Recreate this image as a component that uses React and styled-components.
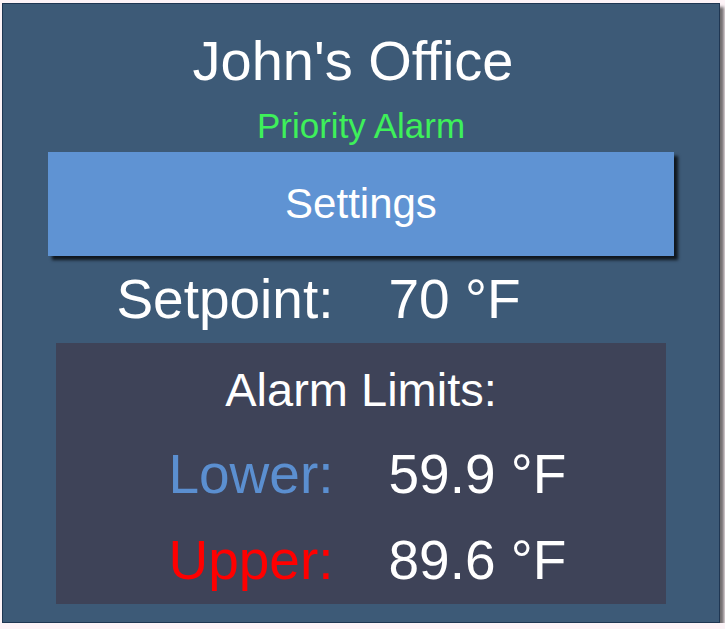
import React from 'react';
import styled, { createGlobalStyle } from 'styled-components';

const GlobalStyle = createGlobalStyle`
  html, body {
    margin: 0;
    padding: 0;
    background: #fdf3f7;
    font-family: "Liberation Sans", Arial, sans-serif;
  }
`

const Page = styled.div`
  padding: 3px 0 0 2px;
`

const Panel = styled.div`
  box-sizing: border-box;
  width: 718px;
  height: 620px;
  background: #3d5a77;
  border: 1px solid #1f3652;
  box-shadow: 4px 4px 3px rgba(0, 0, 0, 0.55);
  display: flex;
  flex-direction: column;
  align-items: stretch;
  padding: 27px 45px 0;
  color: #ffffff;
`

const Title = styled.h1`
  margin: 0;
  padding-right: 16px;
  font-weight: normal;
  font-size: 56px;
  line-height: 60px;
  text-align: center;
`

const Status = styled.div`
  margin-top: 15px;
  font-size: 35px;
  line-height: 40px;
  text-align: center;
  color: #3ef05a;
`

const SettingsButton = styled.button`
  margin-top: 6px;
  height: 104px;
  border: none;
  background: #5f93d3;
  color: #ffffff;
  font-family: inherit;
  font-size: 42px;
  box-shadow: 4px 4px 3px rgba(0, 0, 0, 0.75);
  cursor: pointer;
`

const ReadingGrid = styled.div`
  display: grid;
  grid-template-columns: 1fr 1fr;
  column-gap: 55px;
  row-gap: ${p => p.rowGap || 0}px;
  margin-top: ${p => p.top || 0}px;
`

const Label = styled.div`
  text-align: right;
  font-size: 55px;
  line-height: 60px;
  color: ${p => p.color || '#ffffff'};
`

const Value = styled.div`
  text-align: left;
  font-size: 55px;
  line-height: 60px;
`

const LimitsBox = styled.div`
  margin: 14px 8px 0;
  background: #3e4358;
  padding: 20px 0 14px;
`

const LimitsHeading = styled.div`
  font-size: 47px;
  line-height: 54px;
  text-align: center;
`

const limits = [
  { label: 'Lower:', value: '59.9 °F', color: '#5b8fd0' },
  { label: 'Upper:', value: '89.6 °F', color: '#ff0000' },
]

export default function App() {
  return (
    <Page>
      <GlobalStyle />
      <Panel>
        <Title>John's Office</Title>
        <Status>Priority Alarm</Status>
        <SettingsButton>Settings</SettingsButton>
        <ReadingGrid top={13}>
          <Label>Setpoint:</Label>
          <Value>70 °F</Value>
        </ReadingGrid>
        <LimitsBox>
          <LimitsHeading>Alarm Limits:</LimitsHeading>
          <ReadingGrid top={27} rowGap={26}>
            {limits.map(l => (
              <React.Fragment key={l.label}>
                <Label color={l.color}>{l.label}</Label>
                <Value>{l.value}</Value>
              </React.Fragment>
            ))}
          </ReadingGrid>
        </LimitsBox>
      </Panel>
    </Page>
  )
}
